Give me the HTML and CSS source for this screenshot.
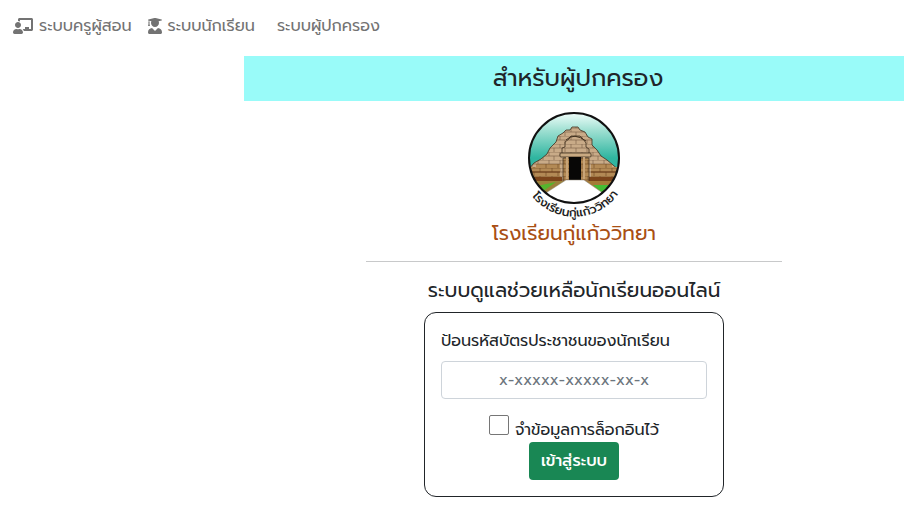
FILE: index.html
```html
<!DOCTYPE html>
<html lang="th">
<head>
<meta charset="utf-8">
<meta name="viewport" content="width=device-width, initial-scale=1">
<title>ระบบผู้ปกครอง</title>
<link rel="stylesheet" href="styles.css">
</head>
<body>
<nav class="navbar">
  <a class="nav-link" href="#teacher">
    <svg class="icon icon-wide" viewBox="0 0 640 512" aria-hidden="true"><path d="M208 352c-2.39 0-4.78.35-7.06 1.09C187.98 357.3 174.35 360 160 360c-14.35 0-27.98-2.7-40.95-6.91-2.28-.74-4.66-1.09-7.05-1.09C49.94 352-.33 402.48 0 464.62.14 490.88 21.73 512 48 512h224c26.27 0 47.86-21.12 48-47.38.33-62.14-49.94-112.62-112-112.62zm-48-32c53.02 0 96-42.98 96-96s-42.98-96-96-96-96 42.98-96 96 42.98 96 96 96zM592 0H208c-26.47 0-48 22.25-48 49.59V96c23.42 0 45.1 6.78 64 17.8V64h352v288h-64v-64H384v64h-76.24c19.1 16.69 33.12 38.73 39.69 64H592c26.47 0 48-22.25 48-49.59V49.59C640 22.25 618.47 0 592 0z"/></svg>
    <span>ระบบครูผู้สอน</span>
  </a>
  <a class="nav-link" href="#student">
    <svg class="icon" viewBox="0 0 448 512" aria-hidden="true"><path d="M319.4 320.6L224 416l-95.4-95.4C57.1 323.7 0 382.2 0 454.4v9.6c0 26.5 21.5 48 48 48h352c26.5 0 48-21.5 48-48v-9.6c0-72.2-57.1-130.7-128.6-133.8zM13.6 79.8l6.4 1.5v58.4c-7 4.2-12 11.5-12 20.3 0 8.4 4.6 15.4 11.1 19.7L3.5 242c-1.7 6.9 2.1 14 7.6 14h41.8c5.5 0 9.3-7.1 7.6-14l-15.6-62.3C51.4 175.4 56 168.4 56 160c0-8.8-5-16.1-12-20.3V87.1l66 15.9c-8.6 17.2-14 36.4-14 57 0 70.7 57.3 128 128 128s128-57.3 128-128c0-20.6-5.3-39.8-14-57l96.3-23.2c18.2-4.4 18.2-27.1 0-31.5l-190.4-46c-13-3.1-26.7-3.1-39.7 0L13.6 48.2c-18.1 4.4-18.1 27.2 0 31.6z"/></svg>
    <span>ระบบนักเรียน</span>
  </a>
  <a class="nav-link nav-link-plain" href="#parent"><span>ระบบผู้ปกครอง</span></a>
</nav>
<main class="content">
  <h1 class="banner">สำหรับผู้ปกครอง</h1>
  <svg class="logo" viewBox="0 0 120 120" role="img" aria-label="ตราโรงเรียน">
    <defs>
      <linearGradient id="sky" x1="0" y1="0" x2="0" y2="1">
        <stop offset="0" stop-color="#f4fffc"/><stop offset=".2" stop-color="#9fe0d2"/><stop offset=".5" stop-color="#2fb5a0"/><stop offset="1" stop-color="#35b9a4"/>
      </linearGradient>
      <clipPath id="disc"><circle cx="60" cy="54" r="45"/></clipPath>
      <pattern id="bricks" width="12" height="8" patternUnits="userSpaceOnUse">
        <rect width="12" height="8" fill="#b38a55"/><path d="M0 0H12M0 4H12M2 0V4M8 4V8" stroke="#6b4420" stroke-width=".6"/>
      </pattern>
      <pattern id="stones" width="11" height="8" patternUnits="userSpaceOnUse">
        <rect width="11" height="8" fill="#c9ab88"/><path d="M0 0H11M0 4H11M2 0V4M7 4V8" stroke="#745a42" stroke-width=".6"/>
      </pattern>
      <path id="arc" d="M15 88A54 54 0 0 0 107 86"/>
    </defs>
    <g clip-path="url(#disc)">
      <rect x="14" y="8" width="92" height="92" fill="url(#sky)"/>
      <path d="M14 66L20 59L27 55L33 50L36 44L42 38L44 32L49 29L52 26H56L58 23H64L66 26L71 28L74 33L78 35V41L83 46L87 52L93 56L99 61L106 67V78H14Z" fill="url(#stones)" stroke="#40301f" stroke-width=".8"/>
      <path d="M14 63H22V60H46V78H14ZM77 60H98V63H106V78H77Z" fill="url(#bricks)"/>
      <path d="M14 73H48V78H14ZM75 73H106V78H75Z" fill="#7c451b"/>
      <path d="M14 68H46M77 68H106" stroke="#6b3b18"/>
      <path d="M48 49V44L51 43V38L55 35L57 32H66L69 35L72 39V43L75 45V50H47Z" fill="url(#stones)" stroke="#40301f" stroke-width=".8"/>
      <path d="M52 36Q60 28 72 37" fill="none" stroke="#40301f"/>
      <rect x="46" y="49" width="31" height="4" rx="1" fill="#c9aa82" stroke="#40301f" stroke-width=".8"/>
      <path d="M49 54H75V78H49Z" fill="url(#bricks)" stroke="#40301f" stroke-width=".7"/>
      <path d="M53 53V75M70 53V75" stroke="#c8a477" stroke-width="2"/>
      <rect x="55" y="53" width="12" height="23" fill="#080706"/>
      <path d="M14 77H50L30 99H14Z" fill="#9c813b"/><path d="M18 83L42 78L28 88Z" fill="#55b52d"/>
      <path d="M72 77H106V99H92Z" fill="#a57b38"/><path d="M79 81L103 81L94 94Z" fill="#45bd35"/>
      <path d="M52 76H70L96 94V101H24V94Z" fill="#fff" stroke="#918b7a" stroke-width=".5"/>
    </g>
    <circle cx="60" cy="54" r="45" fill="none" stroke="#111" stroke-width="2"/>
    <text class="logo-text"><textPath href="#arc" startOffset="50%" text-anchor="middle">โรงเรียนกู่แก้ววิทยา</textPath></text>
  </svg>
  <h2 class="school">โรงเรียนกู่แก้ววิทยา</h2>
  <hr class="divider">
  <h3 class="system">ระบบดูแลช่วยเหลือนักเรียนออนไลน์</h3>
  <form class="card">
    <label class="field-label" for="citizen">ป้อนรหัสบัตรประชาชนของนักเรียน</label>
    <input class="field" id="citizen" type="text" placeholder="x-xxxxx-xxxxx-xx-x">
    <div class="remember">
      <input class="check" id="remember" type="checkbox">
      <label for="remember">จำข้อมูลการล็อกอินไว้</label>
    </div>
    <button class="submit" type="submit">เข้าสู่ระบบ</button>
  </form>
</main>
</body>
</html>
```
FILE: styles.css
```css
* { box-sizing: border-box; }

body {
  margin: 0;
  background: #fff;
  color: #212529;
  font: 16px/24px Prompt, Kanit, "Noto Sans Thai", "Noto Sans", sans-serif;
}

h1, h2, h3 { margin: 0; font-weight: 400; }

.navbar {
  display: flex;
  align-items: center;
  gap: 16px;
  height: 56px;
  padding: 0 13px 4px;
}

.nav-link {
  display: flex;
  align-items: center;
  gap: 6px;
  color: #737373;
  text-decoration: none;
  white-space: nowrap;
}

.nav-link-plain { margin-left: 6px; }

.icon { width: 14px; height: 16px; fill: currentColor; }
.icon-wide { width: 20px; }

.content {
  display: flex;
  flex-direction: column;
  align-items: center;
  margin: 0 12px 0 244px;
}

.banner {
  width: 100%;
  padding: 8px 8px 8px 16px;
  background: #99fbf9;
  font-size: 24px;
  line-height: 29px;
  text-align: center;
}

.logo { width: 120px; height: 120px; margin-top: 3px; }
.logo-text { font-size: 12px; font-weight: 500; fill: #222; }

.school { margin-top: -3px; color: #a94f14; font-size: 20px; line-height: 24px; }

.divider {
  width: 63%;
  margin: 16px 0;
  border: 0;
  border-top: 1px solid #c8c9ca;
}

.system { font-size: 20px; line-height: 24px; }

.card {
  display: flex;
  flex-direction: column;
  align-items: center;
  width: 300px;
  margin-top: 10px;
  padding: 16px;
  border: 1px solid #212529;
  border-radius: 12px;
}

.field-label { align-self: flex-start; margin-bottom: 8px; white-space: nowrap; }

.field {
  width: 100%;
  height: 38px;
  padding: 6px 12px;
  border: 1px solid #ced4da;
  border-radius: 4px;
  color: #212529;
  font: inherit;
  font-size: 15px;
  text-align: center;
}

.field::placeholder { color: #6c757d; opacity: 1; }

.remember {
  display: flex;
  align-items: flex-end;
  gap: 6px;
  margin-top: 16px;
  height: 27px;
  white-space: nowrap;
}

.check {
  appearance: none;
  align-self: flex-start;
  width: 20px;
  height: 20px;
  margin: 0;
  border: 1px solid #767676;
  border-radius: 2px;
}

.check:checked { background: #198754; }

.submit {
  height: 38px;
  padding: 6px 12px;
  border: 0;
  border-radius: 4px;
  background: #198754;
  color: #fff;
  font: inherit;
  font-weight: 500;
  white-space: nowrap;
}
```
